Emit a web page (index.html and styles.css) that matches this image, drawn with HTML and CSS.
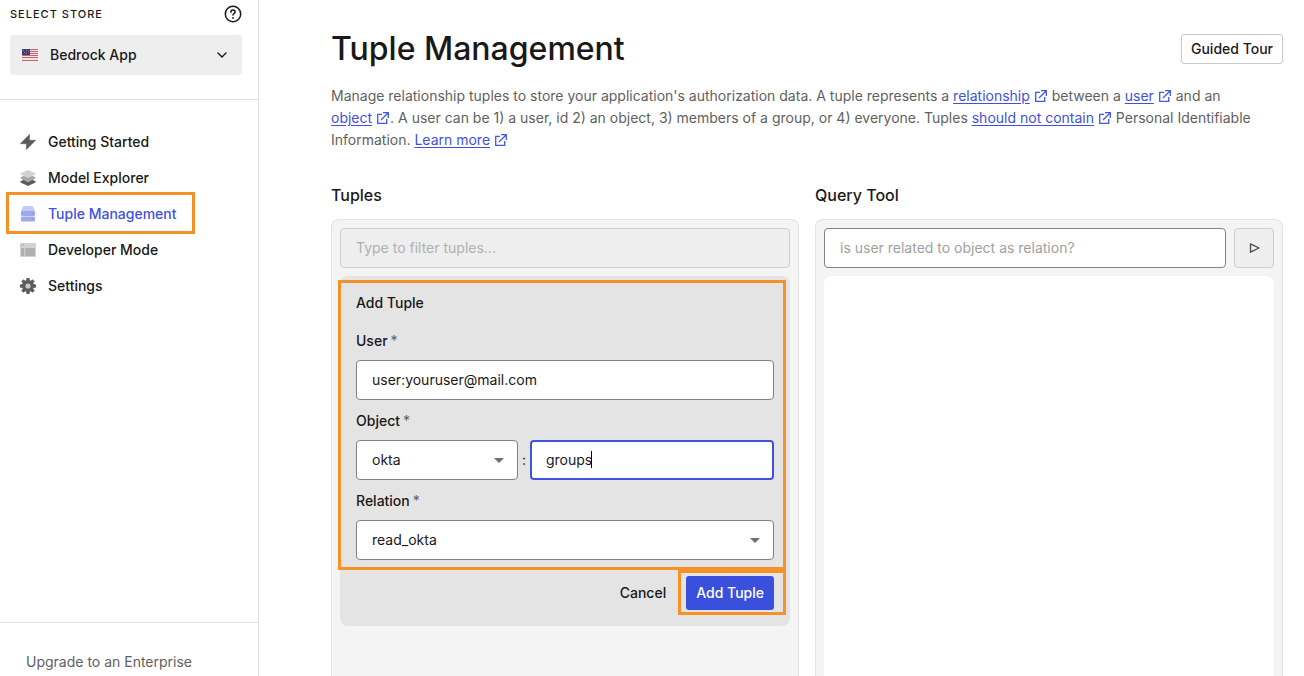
FILE: index.html
```html
<!DOCTYPE html>
<html lang="en">
<head>
<meta charset="utf-8">
<meta name="viewport" content="width=device-width, initial-scale=1">
<title>Tuple Management</title>
<link rel="stylesheet" href="styles.css">
</head>
<body>
<svg class="sprite" aria-hidden="true">
  <symbol id="external" viewBox="0 0 12 12">
    <path d="M5 2.3H.7v9h9V7M6 .7h5.300V6M11 1 4 8" fill="none" stroke="currentColor" stroke-width="1.3"/>
  </symbol>
</svg>
<div class="app">
  <aside class="sidebar">
    <div class="store">
      <div class="store-head">
        <span class="store-label">SELECT STORE</span>
        <button class="help" type="button" aria-label="Help">
          <svg width="18" height="18" viewBox="0 0 18 18" fill="none" stroke="currentColor" stroke-width="1.5" stroke-linecap="round">
            <circle cx="9" cy="9" r="7.7"/>
            <path d="M6.9 7.2c0-1.3.9-2.1 2.1-2.1s2.1.8 2.1 1.9c0 1.5-2.1 1.6-2.1 3.1"/>
            <path d="M9 12.9v.1" stroke-width="1.8"/>
          </svg>
        </button>
      </div>
      <button class="store-select" type="button">
        <svg width="16" height="12" viewBox="0 0 16 12">
          <path fill="#f3e4e4" d="M0 0h16v12H0z"/>
          <path fill="#c4636b" d="M0 0h16v1H0zM0 2h16v1H0zM0 4h16v1H0zM0 6h16v1H0zM0 8h16v1H0zM0 11h16v1H0z"/>
          <path fill="#f3e4e4" d="M0 10h16v1H0z"/>
          <path fill="#3c3f75" d="M0 0h8v6H0z"/>
          <path fill="#7f82ad" d="M1 1h1v1H1zM4 1h1v1H4zM6 2h1v1H6zM2 3h1v1H2zM4 4h1v1H4z"/>
        </svg>
        <span class="store-name">Bedrock App</span>
        <svg width="10" height="6" viewBox="0 0 10 6" fill="none" stroke="#191919" stroke-width="1.4" stroke-linecap="round"><path d="m1 1 4 4 4-4"/></svg>
      </button>
    </div>
    <nav class="nav">
      <a class="nav-item" href="#start">
        <svg width="16" height="16" viewBox="0 0 16 16" fill="#5c5c5c" stroke="#5c5c5c" stroke-width=".6" stroke-linejoin="round"><path d="M9.500.4.400 9.700h6.100L6.300 15.600 15.600 6.300H9.400z"/></svg>
        Getting Started
      </a>
      <a class="nav-item" href="#model">
        <svg width="16" height="16" viewBox="0 0 16 16">
          <path fill="#5c5c5c" d="M.5 11.3 8 8l7.5 3.3v1.200L8 16 .5 12.500z"/>
          <path fill="#a9a9a9" d="M.5 7.200 8 4l7.500 3.200v1.200L8 12.200 .5 8.400z"/>
          <path fill="#d2d2d2" d="M.5 3.300 8 0l7.500 3.300v1L8 8 .5 4.300z"/>
        </svg>
        Model Explorer
      </a>
      <a class="nav-item active" href="#tuples" aria-current="page">
        <svg width="16" height="16" viewBox="0 0 16 16">
          <path fill="#c4cbf5" d="M3.200 0h9.600L15 5H1z"/>
          <rect x="1" y="5" width="14" height="5" rx="1" fill="#9da9ee"/>
          <rect x="1" y="10.500" width="14" height="5" rx="1" fill="#9da9ee"/>
          <path fill="#7f8de6" d="M12 7h1v1h-1zM12 12.500h1v1h-1z"/>
        </svg>
        Tuple Management
      </a>
      <a class="nav-item" href="#developer">
        <svg width="16" height="16" viewBox="0 0 16 16">
          <rect y="1" width="16" height="14" rx="1" fill="#d2d2d2"/>
          <path fill="#9a9a9a" d="M1 3h1v1H1zM3 2h1v1H3z"/>
          <path fill="#b0b0b0" d="M1.200 6h3v8h-3zM5.200 6H15v8H5.200z"/>
        </svg>
        Developer Mode
      </a>
      <a class="nav-item" href="#settings">
        <svg width="16" height="16" viewBox="0 0 16 16">
          <g fill="#5c5c5c">
            <rect x="6.300" width="3.400" height="16" rx=".8"/>
            <rect x="6.300" width="3.400" height="16" rx=".8" transform="rotate(45 8 8)"/>
            <rect x="6.300" width="3.400" height="16" rx=".8" transform="rotate(90 8 8)"/>
            <rect x="6.300" width="3.400" height="16" rx=".8" transform="rotate(135 8 8)"/>
            <circle cx="8" cy="8" r="6"/>
          </g>
          <circle cx="8" cy="8" r="2.600" fill="#c9c9c9"/>
        </svg>
        Settings
      </a>
    </nav>
    <div class="upgrade">Upgrade to an Enterprise</div>
  </aside>

  <main class="main">
    <header class="page-head">
      <h1 class="title">Tuple Management</h1>
      <button class="tour" type="button">Guided Tour</button>
    </header>
    <p class="intro">Manage relationship tuples to store your application's authorization data. A tuple represents a <a href="#relationship">relationship</a> <svg class="ext"><use href="#external"/></svg> between a <a href="#user">user</a> <svg class="ext"><use href="#external"/></svg> and an <span class="keep"><a href="#object">object</a> <svg class="ext"><use href="#external"/></svg>.</span> A user can be 1) a user, id 2) an object, 3) members of a group, or 4) everyone. Tuples <a href="#pii">should not contain</a> <svg class="ext"><use href="#external"/></svg> Personal Identifiable Information. <a href="#learn">Learn more</a> <svg class="ext"><use href="#external"/></svg></p>

    <div class="columns">
      <section class="column">
        <h2 class="column-title">Tuples</h2>
        <div class="panel">
          <input class="field filter" type="text" placeholder="Type to filter tuples..." aria-label="Filter tuples" disabled>
          <form class="tuple-form">
            <h3 class="form-title">Add Tuple</h3>
            <label class="label" for="user">User<span class="star">*</span></label>
            <input class="field" id="user" type="text" value="user:youruser@mail.com">
            <label class="label" for="object">Object<span class="star">*</span></label>
            <div class="object-row">
              <div class="select-wrap type">
                <select class="field" aria-label="Object type"><option>okta</option></select>
                <svg class="arrow" width="10" height="5" viewBox="0 0 10 5"><path d="M0 0h10L5 5z"/></svg>
              </div>
              <span class="colon">:</span>
              <div class="focus-wrap">
                <input class="field focused" id="object" type="text" value="groups">
                <span class="caret"></span>
              </div>
            </div>
            <label class="label" for="relation">Relation<span class="star">*</span></label>
            <div class="select-wrap">
              <select class="field" id="relation"><option>read_okta</option></select>
              <svg class="arrow" width="10" height="5" viewBox="0 0 10 5"><path d="M0 0h10L5 5z"/></svg>
            </div>
            <div class="actions">
              <button class="cancel" type="button">Cancel</button>
              <button class="submit" type="button">Add Tuple</button>
            </div>
          </form>
        </div>
      </section>
      <section class="column">
        <h2 class="column-title">Query Tool</h2>
        <div class="panel">
          <div class="query-row">
            <input class="field" type="text" placeholder="is user related to object as relation?" aria-label="Query">
            <button class="run" type="button" aria-label="Run query">
              <svg width="12" height="12" viewBox="0 0 12 12" fill="none" stroke="#4a4a4a" stroke-width="1.300" stroke-linejoin="round"><path d="M2.500 1.800 11 6l-8.500 4.200z"/></svg>
            </button>
          </div>
          <div class="results"></div>
        </div>
      </section>
    </div>
  </main>
</div>
</body>
</html>
```

FILE: styles.css
```css
* { box-sizing: border-box; }

body {
  margin: 0;
  font: 14px/22px Inter, "Liberation Sans", sans-serif;
  color: #191919;
  background: #fff;
}

button, input, select { font: inherit; color: inherit; }
button { cursor: pointer; padding: 0; }
svg { display: block; flex: none; }
h1, h2, h3, p { margin: 0; }
.sprite { position: absolute; width: 0; height: 0; }

.app { display: flex; height: 100vh; overflow: hidden; }

/* Sidebar */
.sidebar {
  width: 259px;
  flex: none;
  display: flex;
  flex-direction: column;
  border-right: 1px solid #e0e0e0;
}
.store { padding: 5px 16px 24px 10px; border-bottom: 1px solid #e0e0e0; }
.store-head {
  display: flex;
  align-items: center;
  justify-content: space-between;
  height: 18px;
  margin-bottom: 12px;
}
.store-label { font-size: 11px; font-weight: 500; letter-spacing: 1px; }
.help { border: 0; background: none; color: #191919; }
.store-select {
  display: flex;
  align-items: center;
  gap: 12px;
  width: 100%;
  height: 40px;
  padding: 0 15px 0 12px;
  border: 0;
  border-radius: 4px;
  background: #eee;
  font-weight: 500;
  text-align: left;
}
.store-name { flex: 1; }

.nav { flex: 1; padding-top: 24px; }
.nav-item {
  position: relative;
  display: flex;
  align-items: center;
  gap: 12px;
  height: 36px;
  padding-left: 20px;
  color: #191919;
  font-weight: 500;
  text-decoration: none;
}
.nav-item.active { color: #3f51dd; }
.upgrade {
  height: 54px;
  padding: 28px 26px 0;
  border-top: 1px solid #e0e0e0;
  color: #5f5f5f;
}

/* Highlight frames laid over the content */
.nav-item.active::after,
.tuple-form::after,
.submit::after {
  content: "";
  position: absolute;
  border: 3px solid #f59127;
  pointer-events: none;
}
.nav-item.active::after { inset: -4px 63px -2px 6px; }
.tuple-form::after { inset: 4px 4px 56px -2px; }
.submit::after { inset: -6px -12px -5px -8px; }

/* Main */
.main {
  flex: 1;
  min-width: 0;
  display: flex;
  flex-direction: column;
  padding: 28px 21px 0 72px;
}
.page-head { display: flex; align-items: center; justify-content: space-between; }
.title { font-size: 32px; line-height: 42px; font-weight: 500; }
.tour {
  height: 30px;
  padding: 0 9px;
  border: 1px solid #c9c9c9;
  border-radius: 3px;
  background: #fff;
  font-weight: 500;
}
.intro { margin-top: 15px; padding-right: 16px; color: #5f5f5f; }
.intro a { color: #3f51dd; text-underline-offset: 2px; }
.keep { white-space: nowrap; }
.ext { display: inline-block; width: 12px; height: 12px; margin: 0 1px; color: #3f59e4; vertical-align: -1px; }

.columns { flex: 1; display: grid; grid-template-columns: 1fr 1fr; gap: 16px; margin-top: 32px; min-height: 0; }
.column { display: flex; flex-direction: column; min-width: 0; }
.column-title { margin-bottom: 12px; font-size: 16px; line-height: 24px; font-weight: 500; }
.panel {
  flex: 1;
  display: flex;
  flex-direction: column;
  gap: 8px;
  padding: 8px 8px 0;
  border: 1px solid #e3e3e3;
  border-bottom: 0;
  border-radius: 8px 8px 0 0;
  background: #f4f4f4;
}

.field {
  display: block;
  width: 100%;
  height: 40px;
  padding: 0 15px;
  border: 1px solid #818181;
  border-radius: 4px;
  outline: 0;
  background: #fff;
  appearance: none;
}
input.field { padding-bottom: 2px; }
.field::placeholder { color: #a0a0a0; opacity: 1; }
.filter { border-color: #cdcdcd; background: #eee; }
.filter::placeholder { color: #b0b0b0; }
input.focused { padding: 0 14px 2px; border: 2px solid #3f51dd; }

.tuple-form {
  position: relative;
  padding: 16px;
  border-radius: 8px;
  background: #e4e4e4;
}
.form-title { margin-bottom: 16px; font-size: 14px; font-weight: 500; }
.label { display: block; height: 30px; font-weight: 500; }
.field + .label, .object-row + .label { margin-top: 10px; }
.star { margin-left: 3px; color: #5f5f5f; font-weight: 400; }

.object-row { display: flex; align-items: center; }
.type { width: 162px; flex: none; }
.colon { width: 12px; text-align: center; }
.focus-wrap { position: relative; flex: 1; }
.caret { position: absolute; left: 61px; top: 11px; width: 1px; height: 17px; background: #000; }
.select-wrap { position: relative; }
.arrow { position: absolute; right: 14px; top: 18px; fill: #6f6f6f; pointer-events: none; }

.actions { display: flex; justify-content: flex-end; gap: 20px; margin-top: 16px; }
.cancel, .submit { height: 34px; border: 0; border-radius: 3px; font-weight: 500; }
.cancel { background: none; }
.submit { position: relative; padding: 0 10px; background: #3a50dc; color: #fff; }

.query-row { display: flex; gap: 8px; }
.run {
  display: flex;
  align-items: center;
  justify-content: center;
  width: 40px;
  height: 40px;
  flex: none;
  border: 1px solid #cdcdcd;
  border-radius: 4px;
  background: #eee;
}
.results { flex: 1; border-radius: 8px 8px 0 0; background: #fff; }
```
